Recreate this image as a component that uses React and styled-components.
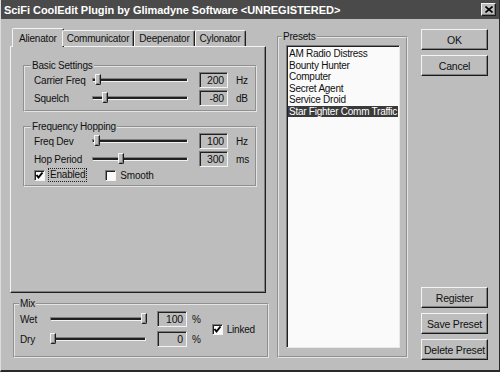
import React from "react";
import styled, { createGlobalStyle } from "styled-components";

const Global = createGlobalStyle`
	html, body {
		margin: 0;
		padding: 0;
		background: #bdbdbd;
	}
	body {
		font-family: "Liberation Sans", Arial, sans-serif;
		font-size: 10px;
		letter-spacing: -0.2px;
		color: #101010;
	}
	* {
		box-sizing: border-box;
	}
`;

const presets = [
	"AM Radio Distress",
	"Bounty Hunter",
	"Computer",
	"Secret Agent",
	"Service Droid",
	"Star Fighter Comm Traffic",
];

const tabs = ["Alienator", "Communicator", "Deepenator", "Cylonator"];

const Slider = ({ pos, width = 96 }) => (
	<Track style={{ width }}>
		<Groove />
		<Thumb style={{ left: pos }} />
	</Track>
);

const Check = ({ checked }) => (
	<Box>
		{checked && (
			<svg width="9" height="9" viewBox="0 0 9 9">
				<path d="M1.5 4 L3.5 6.5 L7.5 1.5" stroke="#000" strokeWidth="2" fill="none" />
			</svg>
		)}
	</Box>
);

const ParamRow = ({ label, pos, value, unit }) => (
	<Row>
		<RowLabel>{label}</RowLabel>
		<Slider pos={pos} />
		<Value>{value}</Value>
		<Unit>{unit}</Unit>
	</Row>
);

const App = () => {
	return (
		<>
			<Global />
			<Window>
				<TitleBar>
					<span>SciFi CoolEdit Plugin by Glimadyne Software &lt;UNREGISTERED&gt;</span>
					<CloseBtn>
						<svg width="8" height="7" viewBox="0 0 8 7">
							<path d="M0.5 0.5 L7.5 6.5 M7.5 0.5 L0.5 6.5" stroke="#000" strokeWidth="1.6" />
						</svg>
					</CloseBtn>
				</TitleBar>
				<Body>
					<LeftCol>
						<TabRow>
							{tabs.map((t, i) => (
								<Tab key={t} $active={i === 0}>
									{t}
								</Tab>
							))}
						</TabRow>
						<Panel>
							<Group>
								<legend>Basic Settings</legend>
								<ParamRow label="Carrier Freq" pos={3} value="200" unit="Hz" />
								<ParamRow label="Squelch" pos={10} value="-80" unit="dB" />
							</Group>
							<Group $gap>
								<legend>Frequency Hopping</legend>
								<ParamRow label="Freq Dev" pos={2} value="100" unit="Hz" />
								<ParamRow label="Hop Period" pos={26} value="300" unit="ms" />
								<CheckRow>
									<CheckItem>
										<Check checked />
										<Focus>Enabled</Focus>
									</CheckItem>
									<CheckItem>
										<Check />
										<span>Smooth</span>
									</CheckItem>
								</CheckRow>
							</Group>
						</Panel>
						<MixGroup>
							<legend>Mix</legend>
							<MixRows>
								<MixRow>
									<MixLabel>Wet</MixLabel>
									<Slider pos={91} />
									<Value $w={30}>100</Value>
									<Unit $pct>%</Unit>
								</MixRow>
								<MixRow>
									<MixLabel>Dry</MixLabel>
									<Slider pos={0} />
									<Value $w={30}>0</Value>
									<Unit $pct>%</Unit>
								</MixRow>
							</MixRows>
							<CheckItem>
								<Check checked />
								<span>Linked</span>
							</CheckItem>
						</MixGroup>
					</LeftCol>
					<PresetGroup>
						<legend>Presets</legend>
						<List>
							{presets.map((p, i) => (
								<Item key={p} $sel={i === presets.length - 1}>
									{p}
								</Item>
							))}
						</List>
					</PresetGroup>
					<Buttons>
						<Button>OK</Button>
						<Button>Cancel</Button>
						<Spacer />
						<Button>Register</Button>
						<Button>Save Preset</Button>
						<Button>Delete Preset</Button>
					</Buttons>
				</Body>
			</Window>
		</>
	);
};

export default App;

const Window = styled.div`
	width: 500px;
	height: 372px;
	display: flex;
	flex-direction: column;
	background: #bdbdbd;
	border-left: 1px solid #dcdcdc;
	border-right: 1px solid #2a2a2a;
	border-bottom: 2px solid #2a2a2a;
`;

const TitleBar = styled.div`
	height: 19px;
	flex: none;
	display: flex;
	align-items: center;
	justify-content: space-between;
	padding: 0 3px 0 3px;
	background: #4a4a4a;
	color: #fff;
	font-family: "Liberation Sans", Arial, sans-serif;
	font-weight: bold;
	font-size: 11px;
	letter-spacing: -0.05px;
`;

const CloseBtn = styled.div`
	width: 15px;
	height: 13px;
	display: flex;
	align-items: center;
	justify-content: center;
	background: #bdbdbd;
	border-top: 1px solid #f2f2f2;
	border-left: 1px solid #f2f2f2;
	border-right: 1px solid #1a1a1a;
	border-bottom: 1px solid #1a1a1a;
	box-shadow: inset -1px -1px 0 #808080;
`;

const Body = styled.div`
	flex: 1;
	display: flex;
	padding: 9px 0 10px 9px;
`;

const LeftCol = styled.div`
	width: 259px;
	display: flex;
	flex-direction: column;
	align-self: flex-start;
`;

const TabRow = styled.div`
	height: 18px;
	display: flex;
	align-items: flex-end;
	padding-left: 4px;
	position: relative;
	z-index: 1;
`;

const Tab = styled.div`
	height: ${(p) => (p.$active ? "19px" : "16px")};
	margin: ${(p) => (p.$active ? "0 -2px -1px -2px" : "0")};
	padding: ${(p) => (p.$active ? "1px 6px 0" : "0 4px")};
	display: flex;
	align-items: center;
	background: #bdbdbd;
	border-top: 1px solid #f4f4f4;
	border-left: 1px solid #f4f4f4;
	border-right: 1px solid #1e1e1e;
	border-radius: 2px 2px 0 0;
	box-shadow: inset -1px 0 0 #808080;
	white-space: nowrap;
`;

const Panel = styled.div`
	width: 256px;
	height: 247px;
	display: flex;
	flex-direction: column;
	padding: 12px 8px 0 12px;
	border-top: 1px solid #f4f4f4;
	border-left: 1px solid #f4f4f4;
	border-right: 1px solid #1e1e1e;
	border-bottom: 1px solid #1e1e1e;
	box-shadow: inset -1px -1px 0 #808080;
`;

const Group = styled.fieldset`
	margin: ${(p) => (p.$gap ? "8px 0 0 0" : "0")};
	padding: 0 6px 4px 9px;
	border: 2px groove #e4e4e4;
	display: flex;
	flex-direction: column;
	gap: 2px;
	min-width: 0;
	legend {
		padding: 0 1px;
		margin-left: -3px;
		line-height: 13px;
	}
`;

const Row = styled.div`
	height: 16px;
	display: flex;
	align-items: center;
`;

const RowLabel = styled.div`
	width: 58px;
	white-space: nowrap;
`;

const Track = styled.div`
	height: 16px;
	position: relative;
	display: flex;
	align-items: center;
	flex: none;
`;

const Groove = styled.div`
	width: 100%;
	height: 4px;
	background: #202020;
	border-top: 1px solid #808080;
	border-left: 1px solid #808080;
	border-bottom: 1px solid #f0f0f0;
	border-right: 1px solid #f0f0f0;
`;

const Thumb = styled.div`
	position: absolute;
	top: 2px;
	width: 6px;
	height: 11px;
	background: #bdbdbd;
	border-top: 1px solid #f4f4f4;
	border-left: 1px solid #f4f4f4;
	border-right: 1px solid #1a1a1a;
	border-bottom: 1px solid #1a1a1a;
	border-radius: 0 0 2px 2px;
	box-shadow: inset -1px -1px 0 #808080;
`;

const Value = styled.div`
	width: ${(p) => p.$w || 29}px;
	height: 16px;
	margin-left: 11px;
	padding-right: 3px;
	display: flex;
	align-items: center;
	justify-content: flex-end;
	font-size: 10.5px;
	background: #bdbdbd;
	border-top: 1px solid #7a7a7a;
	border-left: 1px solid #7a7a7a;
	border-right: 1px solid #f4f4f4;
	border-bottom: 1px solid #f4f4f4;
	box-shadow: inset 1px 1px 0 #202020;
	flex: none;
`;

const Unit = styled.div`
	margin-left: ${(p) => (p.$pct ? "5px" : "8px")};
`;

const CheckRow = styled.div`
	height: 12px;
	display: flex;
	align-items: center;
	gap: 19px;
`;

const CheckItem = styled.label`
	display: flex;
	align-items: center;
	gap: 4px;
`;

const Box = styled.div`
	width: 11px;
	height: 11px;
	display: flex;
	align-items: center;
	justify-content: center;
	background: #fafafa;
	border-top: 1px solid #7a7a7a;
	border-left: 1px solid #7a7a7a;
	border-right: 1px solid #f4f4f4;
	border-bottom: 1px solid #f4f4f4;
	box-shadow: inset 1px 1px 0 #202020;
`;

const Focus = styled.span`
	outline: 1px dotted #202020;
	padding: 0 1px;
	line-height: 12px;
`;

const MixGroup = styled.fieldset`
	margin: 5px 0 0 3px;
	padding: 1px 6px 6px 5px;
	height: 60px;
	border: 2px groove #e4e4e4;
	display: flex;
	align-items: center;
	gap: 11px;
	min-width: 0;
	legend {
		padding: 0 1px;
		margin-left: -1px;
		line-height: 12px;
	}
`;

const MixRows = styled.div`
	display: flex;
	flex-direction: column;
	gap: 4px;
`;

const MixRow = styled.div`
	height: 16px;
	display: flex;
	align-items: center;
`;

const MixLabel = styled.div`
	width: 30px;
`;

const PresetGroup = styled.fieldset`
	width: 131px;
	margin: 2px 0 2px 8px;
	padding: 2px 6px 8px 7px;
	border: 2px groove #e4e4e4;
	display: flex;
	flex-direction: column;
	min-width: 0;
	legend {
		padding: 0 1px;
		margin-left: -4px;
		line-height: 13px;
	}
`;

const List = styled.div`
	flex: 1;
	padding: 2px 1px;
	background: #fafafa;
	border-top: 1px solid #7a7a7a;
	border-left: 1px solid #7a7a7a;
	border-right: 1px solid #e8e8e8;
	border-bottom: 1px solid #e8e8e8;
	box-shadow: inset 1px 1px 0 #202020;
	overflow: hidden;
`;

const Item = styled.div`
	line-height: 11.5px;
	font-size: 10px;
	letter-spacing: -0.25px;
	padding-left: 1px;
	white-space: nowrap;
	background: ${(p) => (p.$sel ? "#3a3a3a" : "transparent")};
	color: ${(p) => (p.$sel ? "#fff" : "#101010")};
`;

const Buttons = styled.div`
	width: 67px;
	margin-left: 13px;
	padding-top: 1px;
	display: flex;
	flex-direction: column;
	gap: 5px;
`;

const Spacer = styled.div`
	flex: 1;
`;

const Button = styled.div`
	height: 21px;
	display: flex;
	align-items: center;
	justify-content: center;
	font-size: 10.5px;
	background: #bdbdbd;
	border-top: 1px solid #f4f4f4;
	border-left: 1px solid #f4f4f4;
	border-right: 1px solid #1a1a1a;
	border-bottom: 1px solid #1a1a1a;
	box-shadow: inset -1px -1px 0 #808080;
	white-space: nowrap;
`;
